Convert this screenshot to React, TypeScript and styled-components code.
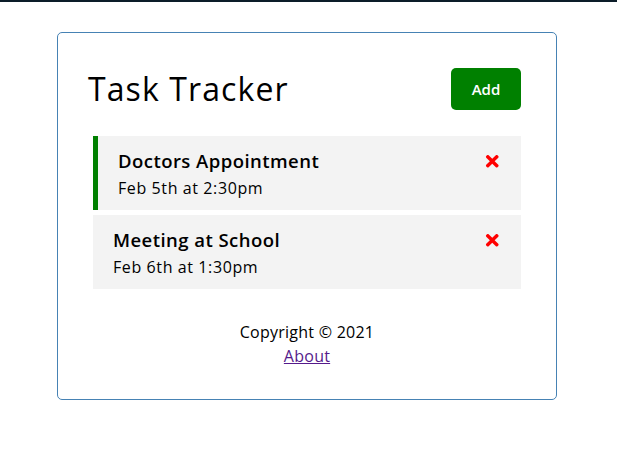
import * as React from 'react'
import styled, {createGlobalStyle} from 'styled-components'
import {FaTimes} from 'react-icons/fa'

const GlobalStyle = createGlobalStyle`
  * { box-sizing: border-box; }
  body {
    margin: 0;
    padding-right: 3px;
    background: #fff;
    font-family: 'Open Sans', 'Liberation Sans', sans-serif;
    color: #000;
  }
`

const TopStrip = styled.div`
  height: 2px;
  margin-right: -3px;
  background: #0c1d29;
`

const Container = styled.div`
  width: 500px;
  margin: 30px auto 0;
  border: 1px solid steelblue;
  border-radius: 5px;
  padding: 30px 30px 31px;
`

const Header = styled.header`
  display: flex;
  justify-content: space-between;
  align-items: center;
  height: 52px;
  margin-bottom: 21px;
`

const Title = styled.h1`
  margin: 0;
  font-size: 32px;
  font-weight: 400;
  line-height: 48px;
  letter-spacing: 1.1px;
`

const Button = styled.button<{color?: string}>`
  background: ${p => p.color || '#000'};
  color: #fff;
  border: none;
  padding: 10px 20px;
  margin: 5px;
  border-radius: 5px;
  font-family: inherit;
  font-size: 15px;
  font-weight: 600;
  line-height: 22px;
  width: 70px;
  cursor: pointer;
`

const TaskItem = styled.div<{reminder?: boolean}>`
  background: #f3f3f3;
  margin: 5px;
  padding: 10px 20px;
  height: 74px;
  border-left: ${p => (p.reminder ? '5px solid green' : 'none')};
`

const TaskTitle = styled.h3`
  display: flex;
  justify-content: space-between;
  align-items: center;
  margin: 0;
  font-size: 18.5px;
  font-weight: 600;
  line-height: 30px;
  letter-spacing: 0.45px;
`

const TaskDay = styled.p`
  margin: 0;
  font-size: 16px;
  line-height: 24px;
  letter-spacing: 0.6px;
`

const Footer = styled.footer`
  margin-top: 31px;
  text-align: center;
  font-size: 16px;
  line-height: 24px;
  letter-spacing: 0.25px;
`

const FooterLink = styled.a`
  color: #551a8b;
`

const tasks = [
  {id: 1, text: 'Doctors Appointment', day: 'Feb 5th at 2:30pm', reminder: true},
  {id: 2, text: 'Meeting at School', day: 'Feb 6th at 1:30pm', reminder: false},
]

export default function App() {
  return (
    <>
      <GlobalStyle />
      <TopStrip />
      <Container>
        <Header>
          <Title>Task Tracker</Title>
          <Button color="green">Add</Button>
        </Header>
        {tasks.map(task => (
          <TaskItem key={task.id} reminder={task.reminder}>
            <TaskTitle>
              {task.text}
              <FaTimes style={{color: 'red', cursor: 'pointer'}} />
            </TaskTitle>
            <TaskDay>{task.day}</TaskDay>
          </TaskItem>
        ))}
        <Footer>
          <div>Copyright &copy; 2021</div>
          <FooterLink href="#about">About</FooterLink>
        </Footer>
      </Container>
    </>
  )
}
